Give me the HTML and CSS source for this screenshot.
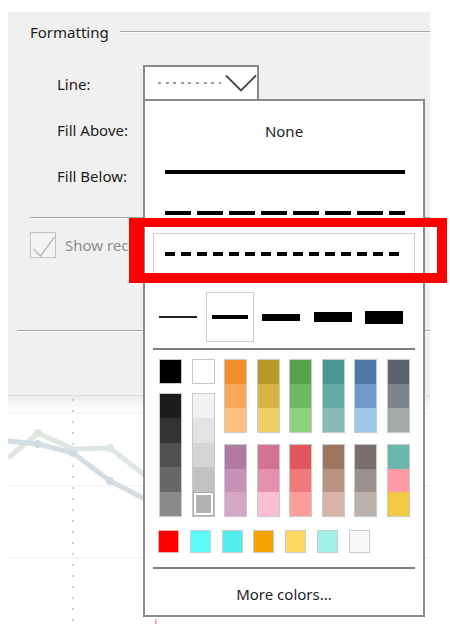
FILE: index.html
```html
<!DOCTYPE html>
<html lang="en">
<head>
<meta charset="utf-8">
<title>Formatting</title>
<link rel="stylesheet" href="styles.css">
</head>
<body>
<div class="page">
  <section class="dialog">
    <div class="group-head">
      <span class="group-title">Formatting</span>
      <span class="group-rule"></span>
    </div>
    <div class="form">
      <div class="label">Line:</div>
      <div class="field">
        <div class="combo">
          <span class="combo-dots"></span>
          <svg class="combo-chev" width="32" height="18" viewBox="0 0 32 18"><polyline points="1,1.5 16,16.5 31,1.5"/></svg>
          <div class="popup">
            <div class="line-opts">
              <div class="opt"><span class="opt-none">None</span></div>
              <div class="opt"><span class="bar bar-solid"></span></div>
              <div class="opt"><span class="bar bar-long"></span></div>
              <div class="opt opt-selected"><span class="bar bar-short"></span></div>
            </div>
            <div class="weights">
              <div class="weight"><span class="wbar w1"></span></div>
              <div class="weight weight-selected"><span class="wbar w2"></span></div>
              <div class="weight"><span class="wbar w3"></span></div>
              <div class="weight"><span class="wbar w4"></span></div>
              <div class="weight"><span class="wbar w5"></span></div>
            </div>
            <div class="sep"></div>
            <div class="palette">
              <div class="pcol">
                <span class="swatch single c-black"></span>
                <div class="block tall">
                  <span class="cell g1"></span><span class="cell g2"></span><span class="cell g3"></span><span class="cell g4"></span><span class="cell g5"></span>
                </div>
              </div>
              <div class="pcol">
                <span class="swatch single c-white"></span>
                <div class="block tall">
                  <span class="cell l1"></span><span class="cell l2"></span><span class="cell l3"></span><span class="cell l4"></span><span class="cell l5 cell-selected"></span>
                </div>
              </div>
              <div class="pcol">
                <div class="block upper"><span class="cell o1"></span><span class="cell o2"></span><span class="cell o3"></span></div>
                <div class="block lower"><span class="cell pu1"></span><span class="cell pu2"></span><span class="cell pu3"></span></div>
              </div>
              <div class="pcol">
                <div class="block upper"><span class="cell y1"></span><span class="cell y2"></span><span class="cell y3"></span></div>
                <div class="block lower"><span class="cell pk1"></span><span class="cell pk2"></span><span class="cell pk3"></span></div>
              </div>
              <div class="pcol">
                <div class="block upper"><span class="cell gr1"></span><span class="cell gr2"></span><span class="cell gr3"></span></div>
                <div class="block lower"><span class="cell r1"></span><span class="cell r2"></span><span class="cell r3"></span></div>
              </div>
              <div class="pcol">
                <div class="block upper"><span class="cell t1"></span><span class="cell t2"></span><span class="cell t3"></span></div>
                <div class="block lower"><span class="cell br1"></span><span class="cell br2"></span><span class="cell br3"></span></div>
              </div>
              <div class="pcol">
                <div class="block upper"><span class="cell b1"></span><span class="cell b2"></span><span class="cell b3"></span></div>
                <div class="block lower"><span class="cell gb1"></span><span class="cell gb2"></span><span class="cell gb3"></span></div>
              </div>
              <div class="pcol">
                <div class="block upper"><span class="cell s1"></span><span class="cell s2"></span><span class="cell s3"></span></div>
                <div class="block lower"><span class="cell m1"></span><span class="cell m2"></span><span class="cell m3"></span></div>
              </div>
            </div>
            <div class="recent">
              <span class="rswatch rc1"></span>
              <span class="rswatch rc2"></span>
              <span class="rswatch rc3"></span>
              <span class="rswatch rc4"></span>
              <span class="rswatch rc5"></span>
              <span class="rswatch rc6"></span>
              <span class="rswatch rc7"></span>
            </div>
            <div class="sep sep-low"></div>
            <div class="more">More colors...</div>
          </div>
        </div>
      </div>
      <div class="label">Fill Above:</div>
      <div class="field"></div>
      <div class="label">Fill Below:</div>
      <div class="field"></div>
    </div>
    <div class="rule rule-mid"></div>
    <div class="check-row">
      <span class="checkbox">
        <svg width="26" height="26" viewBox="0 0 26 26"><polyline points="3.5,17 10.5,24 24.5,5"/></svg>
      </span>
      <span class="check-text">Show recalculated line for highlighted</span>
    </div>
    <div class="rule rule-bottom"></div>
  </section>

  <div class="chart">
    <svg width="422" height="235" viewBox="0 0 422 235">
      <line x1="0" y1="17" x2="422" y2="17" stroke="#eeeeee" stroke-width="1"/>
      <line x1="0" y1="90" x2="422" y2="90" stroke="#ececec" stroke-width="1"/>
      <line x1="0" y1="162" x2="422" y2="162" stroke="#ececec" stroke-width="1"/>
      <line x1="65" y1="3" x2="65" y2="230" stroke="#cfcfcf" stroke-width="2" stroke-dasharray="2 9"/>
      <polyline points="0,62 30,37 65,53 102,52 135,78 170,100" fill="none" stroke="#dfe7e1" stroke-width="5" stroke-linejoin="round"/>
      <polyline points="0,45 30,48 65,57 102,85 135,102 170,118" fill="none" stroke="#d3dde6" stroke-width="5" stroke-linejoin="round"/>
      <circle cx="30" cy="37" r="4" fill="#dde6df"/>
      <circle cx="102" cy="52" r="4" fill="#dde6df"/>
      <circle cx="30" cy="48" r="4" fill="#d1dbe4"/>
      <circle cx="65" cy="57" r="4" fill="#d1dbe4"/>
      <circle cx="102" cy="85" r="4" fill="#d1dbe4"/>
      <rect x="147" y="223" width="1.5" height="5" fill="#f39a9a"/>
    </svg>
  </div>

  <div class="callout"></div>
</div>
</body>
</html>
```

FILE: styles.css
```css
* { box-sizing: border-box; }

html, body {
  margin: 0;
  padding: 0;
  background: #ffffff;
}

body {
  font-family: "Noto Sans", "Open Sans", "DejaVu Sans", sans-serif;
  font-size: 15px;
  color: #1c1c1c;
}

.page {
  position: relative;
  width: 450px;
  height: 630px;
  overflow: hidden;
  background: #ffffff;
  padding-top: 12px;
}

/* ---------- dialog ---------- */
.dialog {
  position: relative;
  width: 422px;
  height: 383px;
  margin-left: 8px;
  background: #f0f0f0;
  padding-top: 10px;
}

.group-head {
  display: flex;
  align-items: center;
  height: 20px;
  padding-left: 22px;
}

.group-title {
  line-height: 20px;
  white-space: nowrap;
}

.group-rule {
  flex: 1;
  height: 1px;
  margin-left: 11px;
  margin-top: -2px;
  background: #a6a6a6;
  box-shadow: 0 1px 0 #ffffff;
}

.form {
  display: grid;
  grid-template-columns: 86px 1fr;
  grid-auto-rows: 46px;
  align-items: center;
  margin-top: 19px;
  margin-left: 49px;
}

.label {
  line-height: 20px;
  white-space: nowrap;
}

.field {
  align-self: stretch;
}

/* ---------- combo ---------- */
.combo {
  position: relative;
  display: flex;
  align-items: center;
  width: 116px;
  height: 36px;
  margin-top: 4px;
  border: 2px solid #8a8a8a;
  background: #ffffff;
  padding-left: 13px;
}

.combo-dots {
  width: 63px;
  height: 2px;
  background: repeating-linear-gradient(90deg, #9c9c9c 0 3px, transparent 3px 7.6px);
}

.combo-chev {
  display: block;
  margin-left: auto;
}

.combo-chev polyline {
  fill: none;
  stroke: #474747;
  stroke-width: 1.8;
}

/* ---------- popup ---------- */
.popup {
  position: absolute;
  z-index: 2;
  left: -2px;
  top: 32px;
  width: 282px;
  height: 518px;
  border: 2px solid #8a8a8a;
  background: #ffffff;
}

.line-opts {
  padding-top: 9px;
}

.opt {
  display: flex;
  align-items: center;
  height: 41px;
  margin: 0 8px;
  padding-left: 12px;
}

.opt:first-child {
  justify-content: center;
  padding-left: 0;
}

.opt-none {
  line-height: 20px;
  color: #1c1c1c;
}

.opt-selected {
  box-shadow: inset 0 0 0 1px #cccccc;
}

.bar {
  display: block;
  height: 4px;
}

.bar-solid {
  width: 240px;
  background: #000000;
}

.bar-long {
  width: 240px;
  background: repeating-linear-gradient(90deg, #000000 0 26px, transparent 26px 32px);
}

.bar-short {
  width: 234px;
  background: repeating-linear-gradient(90deg, #000000 0 10px, transparent 10px 16px);
}

.weights {
  display: flex;
  gap: 3.5px;
  height: 50px;
  margin-top: 18px;
  padding-left: 9px;
}

.weight {
  display: flex;
  align-items: center;
  justify-content: center;
  width: 48px;
  height: 50px;
}

.weight-selected {
  box-shadow: inset 0 0 0 1px #cccccc;
}

.wbar {
  display: block;
  width: 38px;
  background: #000000;
}

.w1 { height: 2px; background: #222222; }
.w2 { height: 4px; width: 36px; }
.w3 { height: 7px; }
.w4 { height: 10px; }
.w5 { height: 13px; }

.sep {
  height: 2px;
  margin: 6px 8px 0;
  background: #7d7d7d;
}

/* ---------- palette ---------- */
.palette {
  display: flex;
  gap: 9.5px;
  margin-top: 9px;
  padding-left: 14px;
}

.pcol {
  display: flex;
  flex-direction: column;
  width: 23px;
}

.swatch.single {
  display: block;
  height: 25px;
  border: 1px solid #c6c6c6;
}

.block {
  display: flex;
  flex-direction: column;
  border: 1px solid #c9c9c9;
}

.block.tall { height: 124px; margin-top: 9px; }
.block.upper { height: 74px; }
.block.lower { height: 73px; margin-top: 11px; }

.cell {
  display: block;
  flex: 1;
}

.cell-selected {
  box-shadow: inset 0 0 0 1px #a8a8a8, inset 0 0 0 3px #ffffff;
}

.c-black { background: #000000; }
.c-white { background: #ffffff; }

.g1 { background: #1d1d1d; }
.g2 { background: #333333; }
.g3 { background: #505050; }
.g4 { background: #676767; }
.g5 { background: #8a8a8a; }

.l1 { background: #f2f2f2; }
.l2 { background: #e3e3e3; }
.l3 { background: #d5d5d5; }
.l4 { background: #c2c2c2; }
.l5 { background: #b2b2b2; }

.o1 { background: #f28e2b; }
.o2 { background: #fba55a; }
.o3 { background: #ffbf80; }
.y1 { background: #b8972b; }
.y2 { background: #d5b443; }
.y3 { background: #f0cf66; }
.gr1 { background: #58a14f; }
.gr2 { background: #6db865; }
.gr3 { background: #8cd17d; }
.t1 { background: #4a9894; }
.t2 { background: #65aca6; }
.t3 { background: #86bcb6; }
.b1 { background: #4e79a7; }
.b2 { background: #6f9bcb; }
.b3 { background: #a0cbe8; }
.s1 { background: #5a636e; }
.s2 { background: #7c848c; }
.s3 { background: #a4a9aa; }

.pu1 { background: #b07aa1; }
.pu2 { background: #c692b8; }
.pu3 { background: #d4a6c8; }
.pk1 { background: #d37295; }
.pk2 { background: #e590ae; }
.pk3 { background: #fabfd2; }
.r1 { background: #e15759; }
.r2 { background: #f07a79; }
.r3 { background: #ff9d9a; }
.br1 { background: #9d7660; }
.br2 { background: #b99480; }
.br3 { background: #d7b5a6; }
.gb1 { background: #79706e; }
.gb2 { background: #9a918e; }
.gb3 { background: #bab0ac; }
.m1 { background: #6bb7ad; }
.m2 { background: #ff9ba5; }
.m3 { background: #f1c944; }

.recent {
  display: flex;
  gap: 10.8px;
  margin-top: 13px;
  padding-left: 13px;
}

.rswatch {
  display: block;
  width: 21px;
  height: 23px;
  border: 1px solid #cccccc;
}

.rc1 { background: #ff0000; border-color: #f3b0b0; }
.rc2 { background: #5cfbfb; }
.rc3 { background: #55ecec; }
.rc4 { background: #f5a300; }
.rc5 { background: #fdd963; }
.rc6 { background: #a1f1e8; }
.rc7 { background: #f9f9f9; }

.sep-low {
  margin-top: 14px;
}

.more {
  margin-top: 15px;
  line-height: 20px;
  text-align: center;
  color: #1c1c1c;
}

/* ---------- lower dialog part ---------- */
.rule {
  height: 1px;
  background: #a6a6a6;
  box-shadow: 0 1px 0 #ffffff;
}

.rule-mid {
  margin-top: 18px;
  margin-left: 22px;
}

.check-row {
  display: flex;
  align-items: center;
  gap: 9px;
  height: 26px;
  margin-top: 14px;
  margin-left: 22px;
  white-space: nowrap;
}

.checkbox {
  display: block;
  width: 26px;
  height: 26px;
  border: 1px solid #c3c3c3;
  background: #f4f4f4;
  flex: none;
}

.checkbox svg {
  display: block;
  margin: -1px 0 0 -1px;
}

.checkbox polyline {
  fill: none;
  stroke: #bdbdbd;
  stroke-width: 1.5;
}

.check-text {
  color: #8c8c8c;
  line-height: 20px;
}

.rule-bottom {
  margin-top: 72px;
  margin-left: 9px;
}

/* ---------- chart behind ---------- */
.chart {
  width: 422px;
  height: 235px;
  margin-left: 8px;
  border-top: 1px solid #dcdcdc;
  background: linear-gradient(180deg, #ececec 0, #f7f7f7 8px, #ffffff 17px);
}

.chart svg {
  display: block;
}

/* ---------- annotation ---------- */
.callout {
  position: absolute;
  z-index: 3;
  left: 129px;
  top: 218px;
  width: 318px;
  height: 65px;
  border-style: solid;
  border-color: #ff0000;
  border-width: 9px 10px 10px 15px;
}
```
